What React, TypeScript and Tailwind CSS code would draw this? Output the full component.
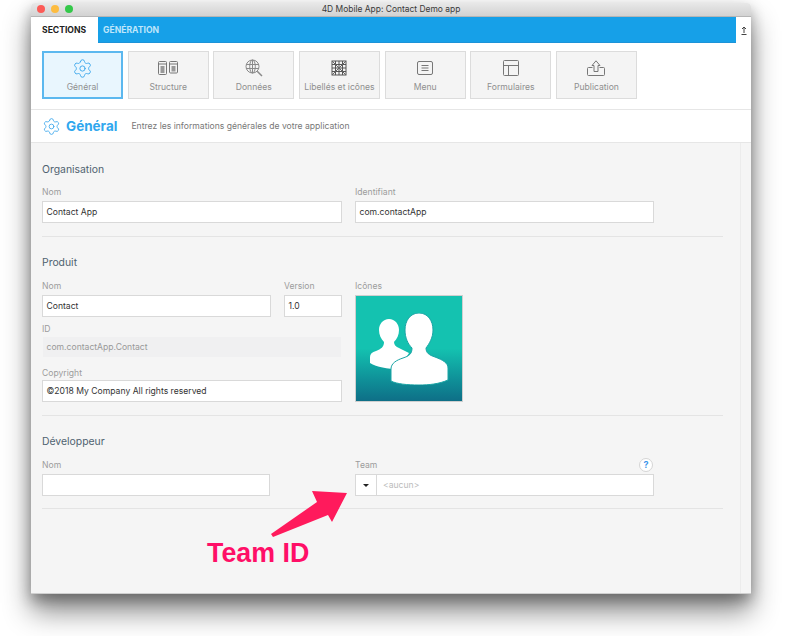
import { Settings } from 'lucide-react'

const font = 'font-["Inter","Liberation_Sans",sans-serif]'

function StructureIcon() {
  return (
    <svg width="20" height="14" viewBox="0 0 20 14" fill="none" stroke="#777" strokeWidth="1">
      <rect x="0.5" y="0.5" width="8" height="13" rx="1" />
      <rect x="11.5" y="0.5" width="8" height="11.5" rx="1" />
      <path d="M0.5 3H8.5M11.5 3H19.5" />
      <rect x="2.5" y="5" width="4" height="7" fill="#999" stroke="none" />
      <rect x="13.5" y="5" width="4" height="5.5" fill="#999" stroke="none" />
    </svg>
  )
}

function DataIcon() {
  return (
    <svg width="18" height="18" viewBox="0 0 18 18" fill="none" stroke="#8a8a8a" strokeWidth="1">
      <circle cx="7.5" cy="7.5" r="6.5" />
      <ellipse cx="7.5" cy="7.5" rx="2.8" ry="6.5" />
      <path d="M1.2 5.5H13.8M1.2 9.5H13.8M7.5 1V14" />
      <path d="M12.2 12.2L17 17" strokeWidth="1.5" />
    </svg>
  )
}

function LabelsIcon() {
  return (
    <svg width="16" height="16" viewBox="0 0 16 16" fill="none" stroke="#555" strokeWidth="1">
      <rect x="1" y="1" width="14" height="14" />
      <path d="M1 4.5H15M1 8H15M1 11.5H15M4.5 1V15M8 1V15M11.5 1V15" />
      <path d="M1 1L15 15M15 1L1 15" stroke="#666" />
    </svg>
  )
}

function MenuIcon() {
  return (
    <svg width="16" height="14" viewBox="0 0 16 14" fill="none" stroke="#777" strokeWidth="1">
      <rect x="0.5" y="0.5" width="15" height="13" rx="1.5" />
      <path d="M4.5 4.5H11.5M4.5 7H11.5M4.5 9.5H11.5" />
    </svg>
  )
}

function FormsIcon() {
  return (
    <svg width="16" height="16" viewBox="0 0 16 16" fill="none" stroke="#777" strokeWidth="1">
      <rect x="0.5" y="0.5" width="15" height="15" rx="1" />
      <path d="M0.5 5.5H15.5M5.5 5.5V15.5" />
    </svg>
  )
}

function PublishIcon() {
  return (
    <svg width="18" height="16" viewBox="0 0 18 16" fill="none" stroke="#777" strokeWidth="1">
      <path d="M5.5 7.5H1.5A1 1 0 0 0 0.5 8.5V14.5A1 1 0 0 0 1.5 15.5H16.5A1 1 0 0 0 17.5 14.5V8.5A1 1 0 0 0 16.5 7.5H12.5" />
      <path d="M7 11.5V5.5H5L9 0.8L13 5.5H11V11.5Z" />
    </svg>
  )
}

function UsersIcon() {
  return (
    <svg width="80" height="72" viewBox="0 0 80 72" fill="#fff">
      <path d="M20 6C26 6 30 11 30 17C30 22 28 26 25 29C25 32 27 34 30 35L40 40L30 56C18 56 8 54 1 50V44C1 41 3 39 7 38C12 36 15 34 15 29C12 26 10 22 10 17C10 11 14 6 20 6Z" />
      <path
        d="M50 0C59 0 64 8 64 17C64 25 60 31 57 35C57 40 60 42 66 44C74 47 79 50 79 55V67C70 71 60 72 50 72C38 72 28 71 22 68V56C22 50 28 47 34 45C40 43 43 41 43 35C39 31 36 25 36 17C36 8 41 0 50 0Z"
        stroke="#1aa5a5"
        strokeWidth="1"
      />
    </svg>
  )
}

function Field({ label, value, className, muted, tight }: { label: string; value?: string; className: string; muted?: boolean; tight?: boolean }) {
  return (
    <div className={className}>
      <div className="h-[14px] text-[8.6px] leading-[14px] text-[#9c9c9c]">{label}</div>
      <div
        className={`${tight ? '' : 'mt-[2px]'} h-[22px] px-[3.5px] text-[8.6px] leading-[20px] border ${
          muted ? 'bg-[#f0f0f1] border-[#f5f5f5] text-[#999]' : 'bg-white border-[#d9d9d9] text-[#333]'
        }`}
      >
        {value}
      </div>
    </div>
  )
}

const sections = [
  { name: 'Général', icon: <Settings size={21} strokeWidth={1.1} className="text-[#3fa9ec]" />, active: true },
  { name: 'Structure', icon: <StructureIcon /> },
  { name: 'Données', icon: <DataIcon /> },
  { name: 'Libellés et icônes', icon: <LabelsIcon /> },
  { name: 'Menu', icon: <MenuIcon /> },
  { name: 'Formulaires', icon: <FormsIcon /> },
  { name: 'Publication', icon: <PublishIcon /> },
]

export default function App() {
  return (
    <div className={`relative w-[790px] h-[636px] overflow-hidden bg-white pt-[3px] pl-[31px] ${font}`}>
      <div className="w-[720px] h-[591px] flex flex-col bg-white rounded-t-[4px] shadow-[0_18px_28px_rgba(0,0,0,0.45),0_6px_14px_rgba(0,0,0,0.3)]">
        {/* Title bar */}
        <div className="relative h-[14px] shrink-0 flex items-center justify-center rounded-t-[4px] bg-gradient-to-b from-[#e8e8e8] to-[#d2d2d2] border-b border-[#b5b5b5] text-[8.45px] text-[#3a3a3a]">
          <div className="absolute left-[6px] top-[2px] flex gap-[6px]">
            <span className="w-[8px] h-[8px] rounded-full bg-[#fc5b57]" />
            <span className="w-[8px] h-[8px] rounded-full bg-[#fdbc40]" />
            <span className="w-[8px] h-[8px] rounded-full bg-[#34c84a]" />
          </div>
          4D Mobile App: Contact Demo app
        </div>

        {/* Tabs */}
        <div className="h-[26px] shrink-0 flex">
          <div className="w-[67px] flex items-center pl-[11px] pt-[1px] bg-white text-[8.6px] font-bold text-[#222]">SECTIONS</div>
          <div className="w-[638px] flex items-center pl-[5px] pt-[1px] bg-[#16a0e8] border-b border-[#1c93d8] text-[8.6px] font-bold text-[#bfe6fb]">GÉNÉRATION</div>
          <div className="flex-1 flex items-center justify-center">
            <svg width="6" height="9" viewBox="0 0 6 9" fill="none" stroke="#444" strokeWidth="1">
              <path d="M3 7V1M1 3L3 1L5 3M0.5 8.5H5.5" />
            </svg>
          </div>
        </div>

        {/* Section buttons */}
        <div className="h-[67px] shrink-0 flex gap-[4.67px] pt-[8px] pl-[11px] border-b border-[#e6e6e6]">
          {sections.map((s) => (
            <div
              key={s.name}
              className={`w-[81px] h-[48px] flex flex-col items-center ${
                s.active ? 'bg-[#e9f6fe] border-2 border-[#5cb8ef]' : 'bg-[#f4f4f4] border border-[#dcdcdc]'
              }`}
            >
              <div className={`${s.active ? 'h-[27px]' : 'h-[28px]'} flex items-center justify-center pt-[3px]`}>{s.icon}</div>
              <div className="text-[8.6px] leading-[12px] mt-[1px] text-[#8f8f8f] whitespace-nowrap">{s.name}</div>
            </div>
          ))}
        </div>

        {/* Page header */}
        <div className="h-[33px] shrink-0 flex items-center pl-[11px] border-b border-[#e6e6e6]">
          <Settings size={19} strokeWidth={1.1} className="text-[#3fa9ec]" />
          <span className="ml-[5px] text-[13.5px] font-bold text-[#2fa7ee]">Général</span>
          <span className="ml-[14px] text-[8.6px] text-[#777]">Entrez les informations générales de votre application</span>
        </div>

        {/* Form */}
        <div className="flex-1 flex bg-[#f5f5f5] border-b border-[#cfcfcf]">
          <div className="w-[710px] pl-[11px] pr-[17px] border-r border-[#ececec]">
            <section className="h-[94px] pt-[20px] border-b border-[#e4e4e4]">
              <h2 className="text-[10.4px] leading-[14px] text-[#4f6270]">Organisation</h2>
              <div className="mt-[8px] flex gap-[13px]">
                <Field label="Nom" value="Contact App" className="w-[300px]" />
                <Field label="Identifiant" value="com.contactApp" className="w-[299px]" />
              </div>
            </section>

            <section className="h-[179px] pt-[19px] border-b border-[#e4e4e4]">
              <h2 className="text-[10.4px] leading-[14px] text-[#4f6270]">Produit</h2>
              <div className="mt-[9px] flex gap-[13px]">
                <div className="w-[300px]">
                  <div className="flex gap-[13px]">
                    <Field label="Nom" value="Contact" className="w-[229px]" />
                    <Field label="Version" value="1.0" className="w-[58px]" />
                  </div>
                  <Field label="ID" value="com.contactApp.Contact" className="mt-[5px]" muted tight />
                  <Field label="Copyright" value="©2018 My Company All rights reserved" className="mt-[8px]" tight />
                </div>
                <div className="w-[108px]">
                  <div className="h-[14px] text-[8.6px] leading-[14px] text-[#9c9c9c]">Icônes</div>
                  <div className="mt-[2px] w-[108px] h-[107px] flex items-end justify-center pb-[16px] border border-[#cfcfcf] bg-gradient-to-b from-[#14c2b0] from-[50%] to-[#0e6f87]">
                    <UsersIcon />
                  </div>
                </div>
              </div>
            </section>

            <section className="h-[93px] pt-[19px] border-b border-[#e4e4e4]">
              <h2 className="text-[10.4px] leading-[14px] text-[#4f6270]">Développeur</h2>
              <div className="mt-[9px] flex gap-[85px]">
                <Field label="Nom" className="w-[228px]" />
                <div className="relative w-[299px]">
                  <div className="h-[14px] text-[8.6px] leading-[14px] text-[#9c9c9c]">Team</div>
                  <div className="mt-[2px] h-[22px] flex bg-white border border-[#d9d9d9] text-[8.6px] leading-[20px]">
                    <div className="w-[21px] flex items-center justify-center border-r border-[#d9d9d9]">
                      <svg width="6" height="3" viewBox="0 0 6 3" fill="#222"><path d="M0 0H6L3 3Z" /></svg>
                    </div>
                    <div className="pl-[6px] text-[#bbb]">&lt;aucun&gt;</div>
                  </div>
                  <div className="absolute right-[1px] top-0 w-[14px] h-[14px] rounded-full bg-white border border-[#d5d5d5] flex items-center justify-center text-[9px] font-bold text-[#3f97ea]">?</div>
                </div>
              </div>
            </section>
          </div>
        </div>
      </div>

      {/* Annotation */}
      <svg className="absolute left-[268px] top-[488px]" width="82" height="52" viewBox="0 0 82 52">
        <path d="M79 5L44 3L49 14L3 46L5 49L60 27L64 34Z" fill="#ff1a5c" />
      </svg>
      <div className='absolute left-[207px] top-[537px] text-[26.8px] leading-[32px] font-bold text-[#ff0f67] font-["Liberation_Sans",sans-serif]'>Team ID</div>
    </div>
  )
}
